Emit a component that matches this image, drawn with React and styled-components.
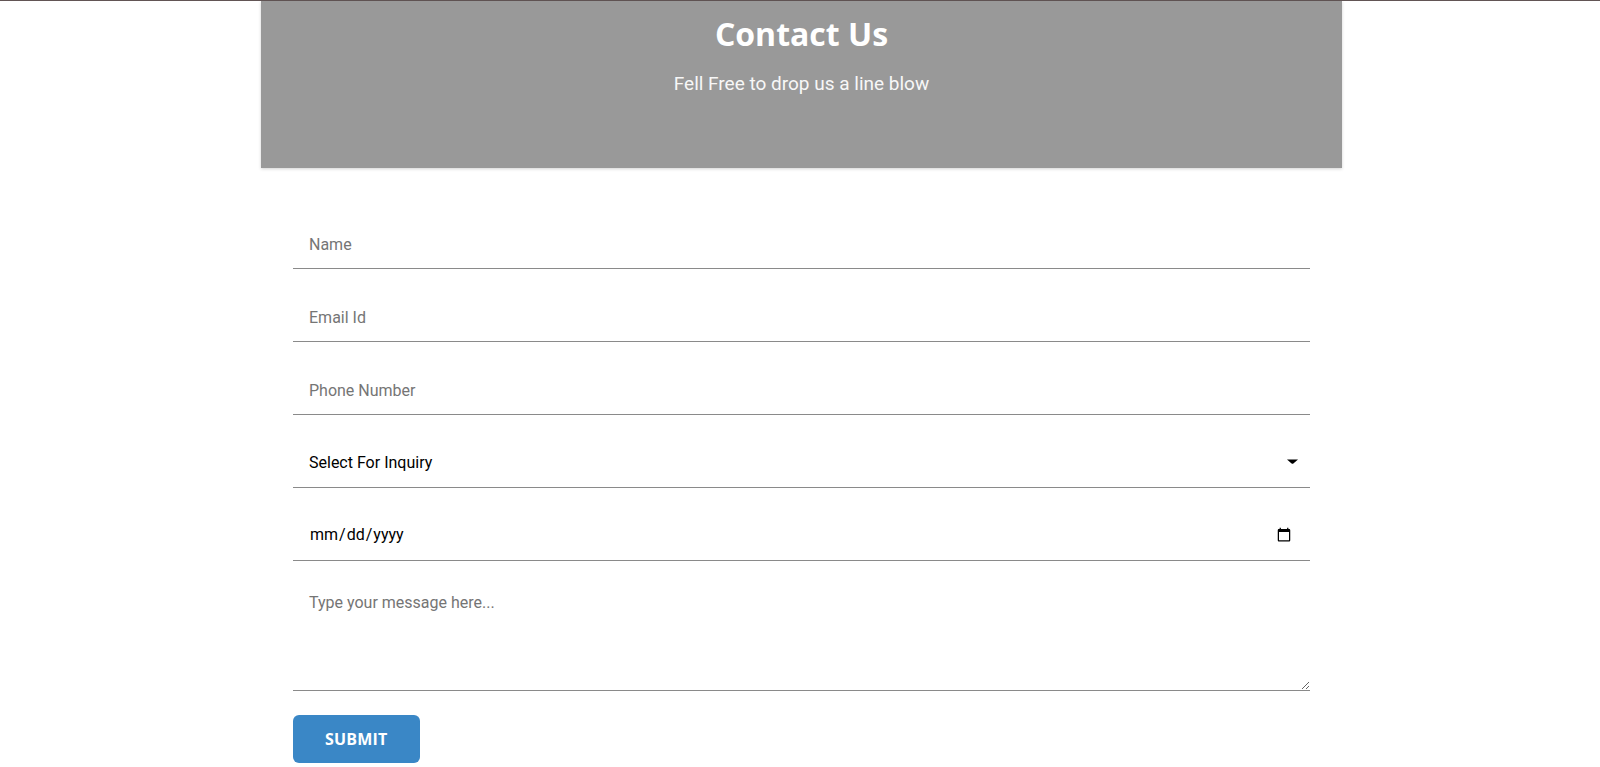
import React from "react";
import styled, { createGlobalStyle } from "styled-components";

const GlobalStyle = createGlobalStyle`
  html, body { margin: 0; padding: 0; background: #ffffff; }
  body { font-family: Roboto, "Liberation Sans", sans-serif; }
  * { box-sizing: border-box; }
`;

const Page = styled.div`
  border-top: 1px solid #625555;
  min-height: 766px;
`;

const Container = styled.section`
  width: 1081px;
  margin: 0 0 0 261px;
`;

const Header = styled.header`
  background: #999999;
  height: 167px;
  padding-top: 11px;
  text-align: center;
  color: #ffffff;
  box-shadow: 0 1px 3px rgba(0, 0, 0, 0.18);
`;

const Title = styled.h1`
  margin: 0;
  font-family: "Open Sans", sans-serif;
  font-weight: 700;
  font-size: 32px;
  line-height: normal;
`;

const Subtitle = styled.p`
  margin: 17px 0 0;
  font-family: Roboto, sans-serif;
  font-size: 19px;
  line-height: normal;
  color: #f7f7f7;
`;

const Form = styled.form`
  display: flex;
  flex-direction: column;
  padding: 53px 32px 0;
`;

const fieldBase = `
  width: 100%;
  border: none;
  border-bottom: 1px solid #8a8a8a;
  border-radius: 0;
  outline: none;
  background: #ffffff;
  font-family: Roboto, sans-serif;
  font-size: 16px;
  color: #000000;
  margin: 0;
  &::placeholder { color: #757575; }
`;

const Field = styled.div`
  position: relative;
  margin-bottom: ${(p) => (p.$last ? "24px" : "25px")};
`;

const Input = styled.input`
  ${fieldBase}
  height: 48px;
  padding: 0 16px ${(p) => (p.type === "date" ? "4px" : "1px")};
  line-height: normal;
`;

const Select = styled.select`
  ${fieldBase}
  appearance: none;
  -webkit-appearance: none;
  height: 48px;
  padding: 0 40px 2px 16px;
`;

const SelectArrow = styled.svg`
  position: absolute;
  right: 12px;
  top: 19px;
  width: 11px;
  height: 5px;
  pointer-events: none;
`;

const TextArea = styled.textarea`
  ${fieldBase}
  display: block;
  height: 105px;
  padding: 7px 16px;
  resize: vertical;
`;

const SubmitButton = styled.button`
  align-self: flex-start;
  height: 48px;
  padding: 0 32px;
  border: none;
  border-radius: 6px;
  background: #3a87c6;
  color: #ffffff;
  font-family: "Open Sans", sans-serif;
  font-weight: 700;
  font-size: 16px;
  letter-spacing: 0.2px;
  cursor: pointer;
`;

export default function App() {
  return (
    <Page>
      <GlobalStyle />
      <Container>
        <Header>
          <Title>Contact Us</Title>
          <Subtitle>Fell Free to drop us a line blow</Subtitle>
        </Header>
        <Form onSubmit={(e) => e.preventDefault()}>
          <Field>
            <Input type="text" placeholder="Name" />
          </Field>
          <Field>
            <Input type="email" placeholder="Email Id" />
          </Field>
          <Field>
            <Input type="tel" placeholder="Phone Number" />
          </Field>
          <Field>
            <Select defaultValue="">
              <option value="">Select For Inquiry</option>
              <option value="sales">Sales</option>
              <option value="support">Support</option>
            </Select>
            <SelectArrow viewBox="0 0 11 5" aria-hidden="true">
              <path d="M0 0.6 H11 L6.4 4.4 Q5.5 5.1 4.6 4.4 Z" fill="#000" />
            </SelectArrow>
          </Field>
          <Field>
            <Input type="date" />
          </Field>
          <Field $last>
            <TextArea placeholder="Type your message here..." />
          </Field>
          <SubmitButton type="submit">SUBMIT</SubmitButton>
        </Form>
      </Container>
    </Page>
  );
}
